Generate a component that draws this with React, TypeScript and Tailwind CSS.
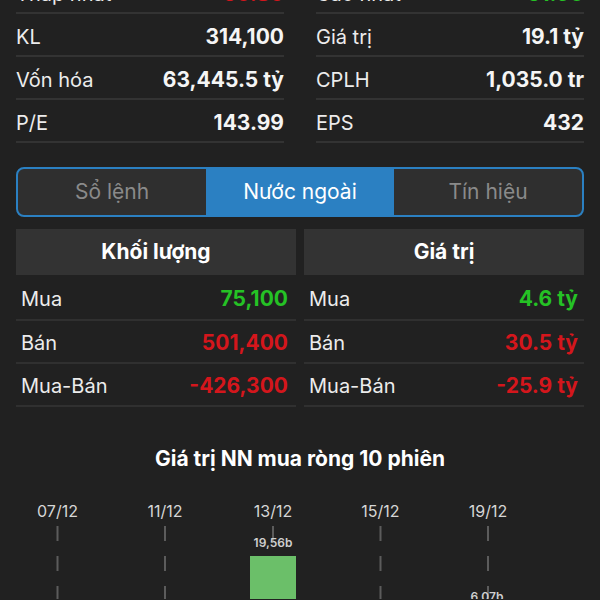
import React from 'react';

type Stat = { label: string; value: string; color?: string };

const statsLeft: Stat[] = [
  { label: 'Thấp nhất', value: '60.80', color: 'text-[#d4161c]' },
  { label: 'KL', value: '314,100' },
  { label: 'Vốn hóa', value: '63,445.5 tỷ' },
  { label: 'P/E', value: '143.99' },
];

const statsRight: Stat[] = [
  { label: 'Cao nhất', value: '61.90', color: 'text-[#25c225]' },
  { label: 'Giá trị', value: '19.1 tỷ' },
  { label: 'CPLH', value: '1,035.0 tr' },
  { label: 'EPS', value: '432' },
];

const tabs = ['Sổ lệnh', 'Nước ngoài', 'Tín hiệu'];

const volumeRows: Stat[] = [
  { label: 'Mua', value: '75,100', color: 'text-[#25c225]' },
  { label: 'Bán', value: '501,400', color: 'text-[#d4161c]' },
  { label: 'Mua-Bán', value: '-426,300', color: 'text-[#d4161c]' },
];

const valueRows: Stat[] = [
  { label: 'Mua', value: '4.6 tỷ', color: 'text-[#25c225]' },
  { label: 'Bán', value: '30.5 tỷ', color: 'text-[#d4161c]' },
  { label: 'Mua-Bán', value: '-25.9 tỷ', color: 'text-[#d4161c]' },
];

const dates = [
  { x: 57.5, label: '07/12' },
  { x: 165, label: '11/12' },
  { x: 273, label: '13/12' },
  { x: 380.5, label: '15/12' },
  { x: 488, label: '19/12' },
];

function StatColumn({ rows }: { rows: Stat[] }) {
  return (
    <div className="flex flex-col">
      {rows.map((r) => (
        <div
          key={r.label}
          className="h-[43px] flex items-center justify-between border-b-2 border-[#333333] pt-[4px]"
        >
          <span className="text-[20px] text-[#ececec]">{r.label}</span>
          <span className={`text-[21px] font-bold ${r.color ?? 'text-[#f5f5f5]'}`}>{r.value}</span>
        </div>
      ))}
    </div>
  );
}

function ForeignTable({ title, rows, padRight }: { title: string; rows: Stat[]; padRight: string }) {
  return (
    <div className="flex flex-col">
      <div className="h-[46px] bg-[#333333] flex items-center justify-center text-[21px] font-bold text-white">
        {title}
      </div>
      {rows.map((r, i) => (
        <div
          key={r.label}
          className={`${i === 0 ? 'h-[46px] pt-[4px]' : 'h-[43px] pt-[2px]'} flex items-center justify-between border-b-2 border-[#303030] pl-[5px] ${padRight}`}
        >
          <span className="text-[20px] text-[#ececec]">{r.label}</span>
          <span className={`text-[21px] font-bold ${r.color}`}>{r.value}</span>
        </div>
      ))}
    </div>
  );
}

function NetChart() {
  return (
    <svg width="600" height="110" viewBox="0 0 600 110" className="block">
      {dates.map((d) => (
        <g key={d.label}>
          <text
            x={d.x}
            y={28}
            textAnchor="middle"
            fontSize="16"
            fill="#d6d6d6"
            fontFamily="Inter, sans-serif"
          >
            {d.label}
          </text>
          <line
            x1={d.x}
            y1={37}
            x2={d.x}
            y2={112}
            stroke="#5c5c5c"
            strokeWidth="2"
            strokeDasharray="15 15"
          />
        </g>
      ))}
      <rect x="250" y="67" width="46" height="50" fill="#6bbf69" />
      <text x="273" y="58" textAnchor="middle" fontSize="12" fontWeight="600" fill="#cfcfcf" fontFamily="Inter, sans-serif">
        19,56b
      </text>
      <text x="487" y="112" textAnchor="middle" fontSize="12" fontWeight="600" fill="#cfcfcf" fontFamily="Inter, sans-serif">
        6,07b
      </text>
    </svg>
  );
}

export default function App() {
  return (
    <div
      className="w-full h-[600px] overflow-hidden bg-[#212121]"
      style={{ fontFamily: 'Inter, "Noto Sans", sans-serif' }}
    >
      <div className="-mt-[29px] px-4 grid grid-cols-2 gap-x-8">
        <StatColumn rows={statsLeft} />
        <StatColumn rows={statsRight} />
      </div>

      {/* Tabs */}
      <div className="mx-4 mt-[24px] h-[50px] flex rounded-lg border-2 border-[#2b80c2] overflow-hidden bg-[#2f2f2f]">
        {tabs.map((t) => (
          <div
            key={t}
            className={`flex-1 flex items-center justify-center text-[21px] ${
              t === 'Nước ngoài' ? 'bg-[#2b80c2] text-white' : 'text-[#8a8a8a]'
            }`}
          >
            {t}
          </div>
        ))}
      </div>

      {/* Foreign trading */}
      <div className="mx-4 mt-[12px] grid grid-cols-2 gap-x-2">
        <ForeignTable title="Khối lượng" rows={volumeRows} padRight="pr-[8px]" />
        <ForeignTable title="Giá trị" rows={valueRows} padRight="pr-[6px]" />
      </div>

      <div className="mt-[40px] text-center text-[21px] font-bold text-white h-[24px] leading-[24px]">
        Giá trị NN mua ròng 10 phiên
      </div>
      <div className="mt-[18px]">
        <NetChart />
      </div>
    </div>
  );
}
